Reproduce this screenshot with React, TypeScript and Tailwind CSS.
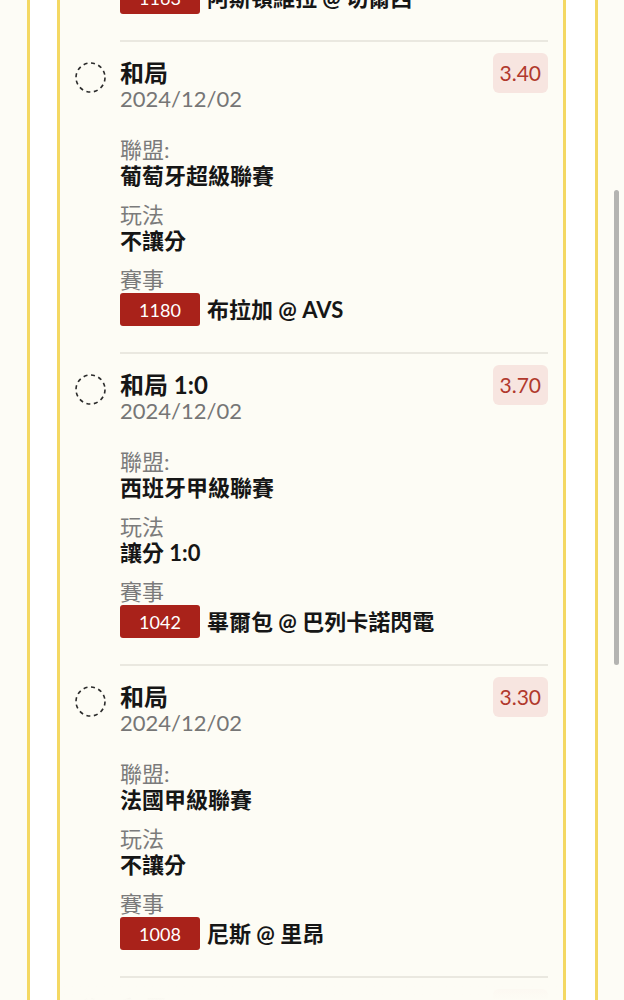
import React from 'react';

type Bet = {
    pick: string;
    date: string;
    odds: string;
    league: string;
    play: string;
    code: string;
    match: string;
};

const bets: Bet[] = [
    { pick: '和局', date: '2024/12/02', odds: '3.60', league: '英格蘭超級聯賽', play: '不讓分', code: '1163', match: '阿斯頓維拉 @ 切爾西' },
    { pick: '和局', date: '2024/12/02', odds: '3.40', league: '葡萄牙超級聯賽', play: '不讓分', code: '1180', match: '布拉加 @ AVS' },
    { pick: '和局 1:0', date: '2024/12/02', odds: '3.70', league: '西班牙甲級聯賽', play: '讓分 1:0', code: '1042', match: '畢爾包 @ 巴列卡諾閃電' },
    { pick: '和局', date: '2024/12/02', odds: '3.30', league: '法國甲級聯賽', play: '不讓分', code: '1008', match: '尼斯 @ 里昂' },
    { pick: '和局', date: '2024/12/02', odds: '3.20', league: '義大利甲級聯賽', play: '不讓分', code: '1021', match: '拉素 @ 拿玻里' },
];

function PendingIcon() {
    return (
        <svg width="31" height="31" viewBox="0 0 31 31" fill="none">
            <circle cx="15.5" cy="15.5" r="14.5" stroke="#2b2b2b" strokeWidth="1.6" strokeDasharray="4 3.6" />
        </svg>
    );
}

function BetRow({ bet }: { bet: Bet }) {
    return (
        <div className="flex gap-[14px]">
            {/* Status */}
            <div className="w-[31px] shrink-0 pt-[22px]">
                <PendingIcon />
            </div>

            {/* Details */}
            <div className="flex-1 border-t-2 border-[#eae8e0] pt-[11px] pb-[26px]">
                <div className="flex items-start justify-between">
                    <div className="pt-[7px]">
                        <div className="text-[24px] leading-[26px] font-bold text-[#161616]">{bet.pick}</div>
                        <div className="text-[22px] leading-[26px] text-[#767676]">{bet.date}</div>
                    </div>
                    <div className="h-[40px] px-[7px] rounded-[6px] bg-[#f7e5e0] text-[#b1392d] text-[21px] flex items-center">
                        {bet.odds}
                    </div>
                </div>

                <div className="mt-[25px] text-[22px] leading-[26px]">
                    <div className="text-[#7b7b7b]">聯盟:</div>
                    <div className="font-bold text-[#161616]">{bet.league}</div>
                </div>
                <div className="mt-[13px] text-[22px] leading-[26px]">
                    <div className="text-[#7b7b7b]">玩法</div>
                    <div className="font-bold text-[#161616]">{bet.play}</div>
                </div>
                <div className="mt-[13px] text-[22px] leading-[26px]">
                    <div className="text-[#7b7b7b]">賽事</div>
                    <div className="flex items-center gap-[7px]">
                        <span className="w-[80px] h-[33px] rounded-[3px] bg-[#a9221a] text-white text-[18px] flex items-center justify-center">
                            {bet.code}
                        </span>
                        <span className="font-bold text-[#161616]">{bet.match}</span>
                    </div>
                </div>
            </div>
        </div>
    );
}

export default function App() {
    return (
        <div
            className="relative h-[1000px] overflow-hidden bg-[#fdfcf6] pl-[27px] pr-[26px]"
            style={{ fontFamily: 'Lato, "Noto Sans CJK TC", sans-serif' }}
        >
            <div className="h-full border-x-[3px] border-[#f4d863] bg-white pl-[27px] pr-[29px]">
                <div className="relative h-full overflow-hidden border-x-[3px] border-[#f4d863] bg-[#fdfcf5] pl-[15px] pr-[15px]">
                    <div className="-mt-[272px]">
                        {bets.map((bet, i) => (
                            <BetRow key={i} bet={bet} />
                        ))}
                    </div>
                    {/* Bottom fade */}
                    <div className="absolute inset-x-0 bottom-0 h-[22px] bg-gradient-to-b from-[#fdfcf5]/70 to-[#fdfcf5]"></div>
                </div>
            </div>

            {/* Scroll indicator */}
            <div className="absolute right-[5px] top-[190px] w-[5px] h-[475px] rounded-full bg-[#b4b4b2]"></div>
        </div>
    );
}
